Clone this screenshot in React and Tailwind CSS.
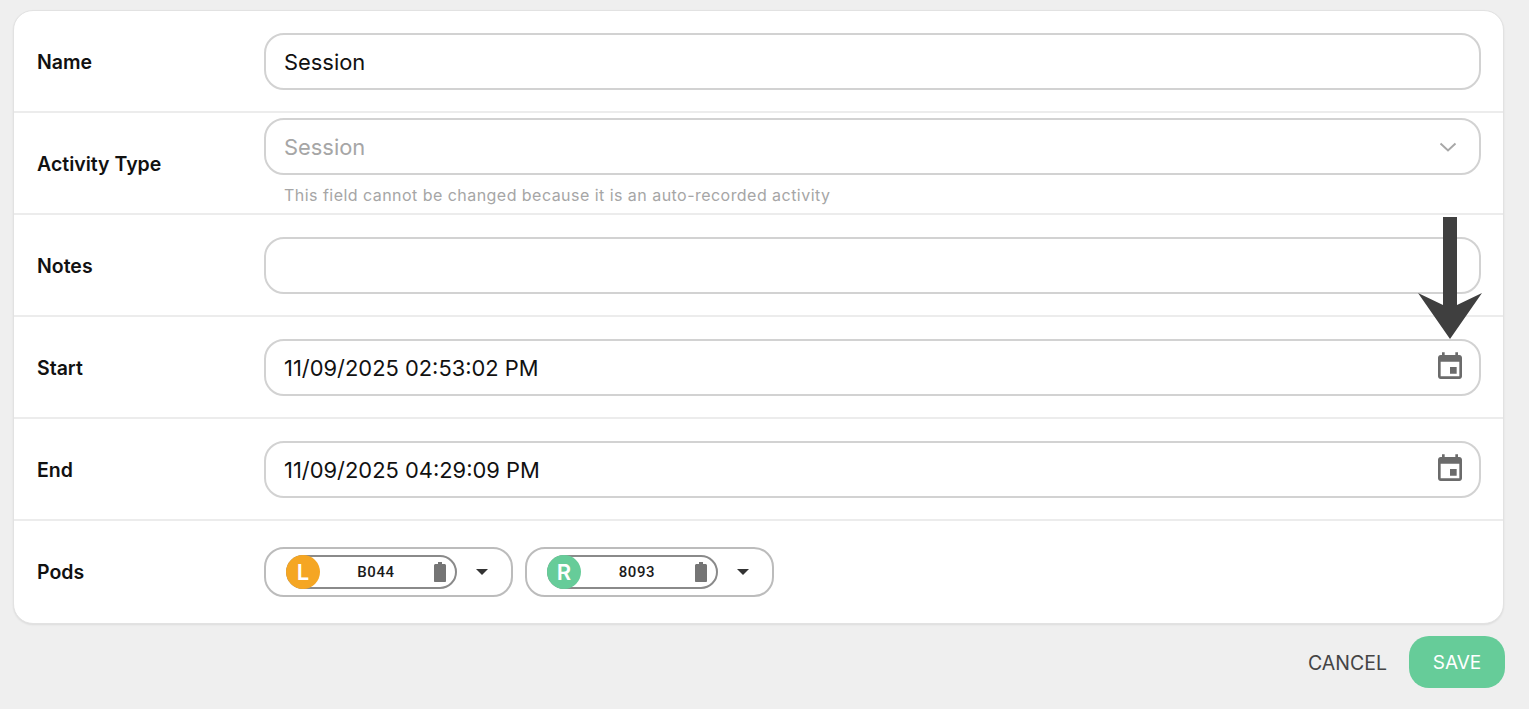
const CalendarIcon = () => (
  <svg width="32" height="32" viewBox="0 0 24 24" fill="#6b6b6b">
    <path d="M17 12h-5v5h5v-5zM16 1v2H8V1H6v2H5c-1.11 0-1.99.9-1.99 2L3 19c0 1.1.89 2 2 2h14c1.1 0 2-.9 2-2V5c0-1.1-.9-2-2-2h-1V1h-2zm3 18H5V8h14v11z" />
  </svg>
);

const Chevron = () => (
  <svg className="mr-[9px]" width="18" height="10" viewBox="0 0 18 10" fill="none" stroke="#a8a8a8" strokeWidth="2">
    <path d="M1.5 1.5 9 8.5l7.5-7" />
  </svg>
);

const Battery = () => (
  <svg width="12" height="20" viewBox="0 0 12 20" fill="#757575">
    <path d="M4 0h4v2h2.5c.8 0 1.500.7 1.500 1.500V19c0 .6-.5 1-1 1H1c-.6 0-1-.4-1-1V3.500C0 2.700.7 2 1.500 2H4z" />
  </svg>
);

const Row = ({ label, children, last }) => (
  <div className={`flex h-[102px] items-center pl-[23px] ${last ? '' : 'border-b-2 border-[#ececec]'}`}>
    <div className={`w-[227px] shrink-0 text-[19.5px] font-semibold text-[#111111] ${last ? 'pt-[2px]' : 'pt-[4px]'}`}>{label}</div>
    <div className="min-w-0 flex-1 pr-[22px]">{children}</div>
  </div>
);

const Field = ({ value, muted, icon }) => (
  <div className="flex h-[57px] items-center justify-between rounded-[20px] border-2 border-[#d2d2d2] bg-white pl-[18px] pr-[13px]">
    <span className={`pt-[2px] text-[21.9px] ${muted ? 'text-[#a6a6a6]' : 'text-[#111111]'}`}>{value}</span>
    {icon}
  </div>
);

const Pod = ({ side, code, color }) => (
  <div className="flex h-[50px] w-[249px] items-center rounded-[20px] border-2 border-[#bcbcbc] pl-[20px]">
    <div className="relative flex h-[34px] w-[171px] items-center rounded-full border-2 border-[#8a8a8a] pr-[9px]">
      <div className={`absolute -left-[2px] -top-[2px] flex h-[34px] w-[34px] items-center justify-center rounded-full text-[22px] font-semibold text-white ${color}`}>{side}</div>
      <span className="flex-1 pl-[30px] text-center font-['Roboto',sans-serif] text-[15px] font-medium tracking-[0.6px] text-[#1a1a1a]">{code}</span>
      <Battery />
    </div>
    <div className="ml-[19px] h-0 w-0 border-x-[6px] border-t-[6px] border-x-transparent border-t-[#333333]" />
  </div>
);

export default function App() {
  return (
    <div className="relative h-[709px] overflow-hidden bg-[#efefef] pl-[13px] pt-[10px] font-['Inter',sans-serif]">
      <div className="w-[1491px] overflow-hidden rounded-[20px] border border-[#e2e2e2] bg-white shadow-[0_1px_2px_rgba(0,0,0,0.08)]">
        <Row label="Name">
          <Field value="Session" />
        </Row>

        <div className="flex h-[102px] items-center border-b-2 border-[#ececec] pl-[23px]">
          <div className="w-[227px] shrink-0 pt-[4px] text-[19.5px] font-semibold text-[#111111]">Activity Type</div>
          <div className="min-w-0 flex-1 self-start pr-[22px] pt-[5px]">
            <Field value="Session" muted icon={<Chevron />} />
            <p className="mt-[10px] pl-[20px] text-[16px] leading-[20px] tracking-[0.46px] text-[#a6a6a6]">
              This field cannot be changed because it is an auto-recorded activity
            </p>
          </div>
        </div>

        <Row label="Notes">
          <Field value="" />
        </Row>
        <Row label="Start">
          <Field value="11/09/2025 02:53:02 PM" icon={<CalendarIcon />} />
        </Row>
        <Row label="End">
          <Field value="11/09/2025 04:29:09 PM" icon={<CalendarIcon />} />
        </Row>
        <Row label="Pods" last>
          <div className="flex gap-[12px]">
            <Pod side="L" code="B044" color="bg-[#f5a623]" />
            <Pod side="R" code="8093" color="bg-[#66cc99]" />
          </div>
        </Row>
      </div>

      <div className="mt-[12px] flex w-[1492px] items-center justify-end gap-[22px]">
        <span className="pt-[3px] text-[19.5px] text-[#444444]">CANCEL</span>
        <div className="flex h-[52px] w-[96px] items-center justify-center rounded-[20px] bg-[#66cc99] pt-[2px] text-[19px] text-white">SAVE</div>
      </div>

      {/* annotation arrow over the start field */}
      <svg className="absolute left-[1418px] top-[217px]" width="64" height="122" viewBox="0 0 64 122" fill="#3f3f3f">
        <path d="M25 0h14v88l25-12-32 46L0 76l25 12z" />
      </svg>
    </div>
  );
}
